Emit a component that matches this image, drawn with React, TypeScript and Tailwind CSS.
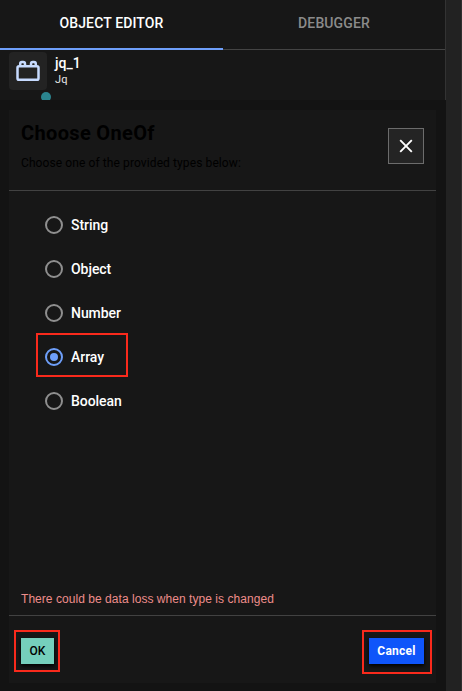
const options = ['String', 'Object', 'Number', 'Array', 'Boolean'];

function Option({ label, selected }: { label: string; selected: boolean }) {
  return (
    <label className="relative flex h-11 items-center gap-2">
      <span
        className={
          selected
            ? 'flex size-[18px] items-center justify-center rounded-full border-2 border-[#6e9ffa]'
            : 'size-[18px] rounded-full border-2 border-[#8f8f8f]'
        }
      >
        {selected && <span className="size-2 rounded-full bg-[#6e9ffa]" />}
      </span>
      <span className="text-[14px] font-medium leading-5 tracking-[-0.05px] text-white">{label}</span>
      {selected && <span className="absolute -left-[9px] top-[-2px] h-11 w-[92px] border-2 border-[#f92a1c]" />}
    </label>
  );
}

function BrickIcon() {
  return (
    <svg width="24" height="22" viewBox="0 0 24 22" fill="none" stroke="#c7dbff" strokeWidth="2.5">
      <rect x="1.5" y="6.2" width="21" height="13.600" rx="1.6" />
      <path d="M4.200 6V4Q4.200 2 6 2h1.200Q9 2 9 4V6M15 6V4Q15 2 16.800 2h1.200Q19.800 2 19.800 4V6" />
    </svg>
  );
}

export default function App() {
  return (
    <div className="flex h-[691px] w-[462px] overflow-hidden bg-[#222222] font-['Roboto',sans-serif]">
      <div className="flex w-[446px] flex-col bg-[#131313]">
        <div className="flex h-[100px] shrink-0 flex-col overflow-hidden border-r border-[#333333] bg-[#171717]">
          <div className="flex h-[50px] shrink-0 text-[14px] font-medium tracking-[0.12px]">
            <div className="flex w-[223px] items-center justify-center border-b-2 border-[#6e9ffa] pt-px text-white">
              <span className="-translate-y-px">OBJECT EDITOR</span>
            </div>
            <div className="flex flex-1 items-center justify-center border-b border-[#444444] text-[#8b8b8b]">
              <span className="-translate-y-px">DEBUGGER</span>
            </div>
          </div>
          <div className="flex pl-[9px] pt-[2px]">
            <div className="relative flex size-[38px] items-center justify-center rounded bg-[#232323]">
              <BrickIcon />
              <span className="absolute left-8 top-10 size-[10px] rounded-full bg-[#2b858f]" />
            </div>
            <div className="ml-2 pt-[3px] text-white">
              <div className="text-[14px] font-medium leading-4">jq_1</div>
              <div className="pt-px text-[11px] leading-4 tracking-[0.3px] text-[#e6e6e6]">Jq</div>
            </div>
          </div>
        </div>

        <div className="mx-[9px] mb-2 mt-[10px] flex w-[427px] flex-1 flex-col bg-[#171717]">
          <header className="flex h-[81px] shrink-0 justify-between border-b border-[#424242] pl-3 pr-3 text-black">
            <div className="pt-[11px]">
              <h1 className="text-[20px] font-bold leading-6 tracking-[0.35px]">Choose OneOf</h1>
              <p className="mt-[10px] text-[12px] leading-4 tracking-[0.1px]">Choose one of the provided types below:</p>
            </div>
            <button className="mt-[18px] flex size-9 items-center justify-center border border-[#6c6c6c] bg-[#242424]">
              <svg width="14" height="14" viewBox="0 0 14 14" stroke="#ffffff" strokeWidth="1.9">
                <path d="M1.200 1.200l11.600 11.600M12.800 1.200L1.200 12.800" />
              </svg>
            </button>
          </header>

          <div className="flex flex-1 flex-col pl-9 pt-3">
            {options.map((o) => (
              <Option key={o} label={o} selected={o === 'Array'} />
            ))}
          </div>

          <p className="mb-2 pl-3 font-['Liberation_Sans',sans-serif] text-[12px] leading-4 tracking-[0.045px] text-[#ee8d8b]">
            There could be data loss when type is changed
          </p>
          <footer className="flex h-[68px] shrink-0 items-start justify-between border-t border-[#424242] px-3 pt-[22px] text-[12px]">
            <div className="relative">
              <button className="h-[26px] w-[33px] bg-[#75cfbc] font-medium text-black shadow-[0_2px_4px_#000000]">OK</button>
              <span className="absolute -left-[7px] -top-2 h-[42px] w-[46px] border-2 border-[#f92a1c]" />
            </div>
            <div className="relative">
              <button className="h-[26px] w-[55px] bg-[#0f55fa] font-bold tracking-[0.25px] text-white shadow-[0_2px_4px_#000000]">Cancel</button>
              <span className="absolute -left-[7px] -top-2 h-11 w-[70px] border-2 border-[#f92a1c]" />
            </div>
          </footer>
        </div>
      </div>
      <div className="flex-1 border-r border-[#303030]" />
    </div>
  );
}
